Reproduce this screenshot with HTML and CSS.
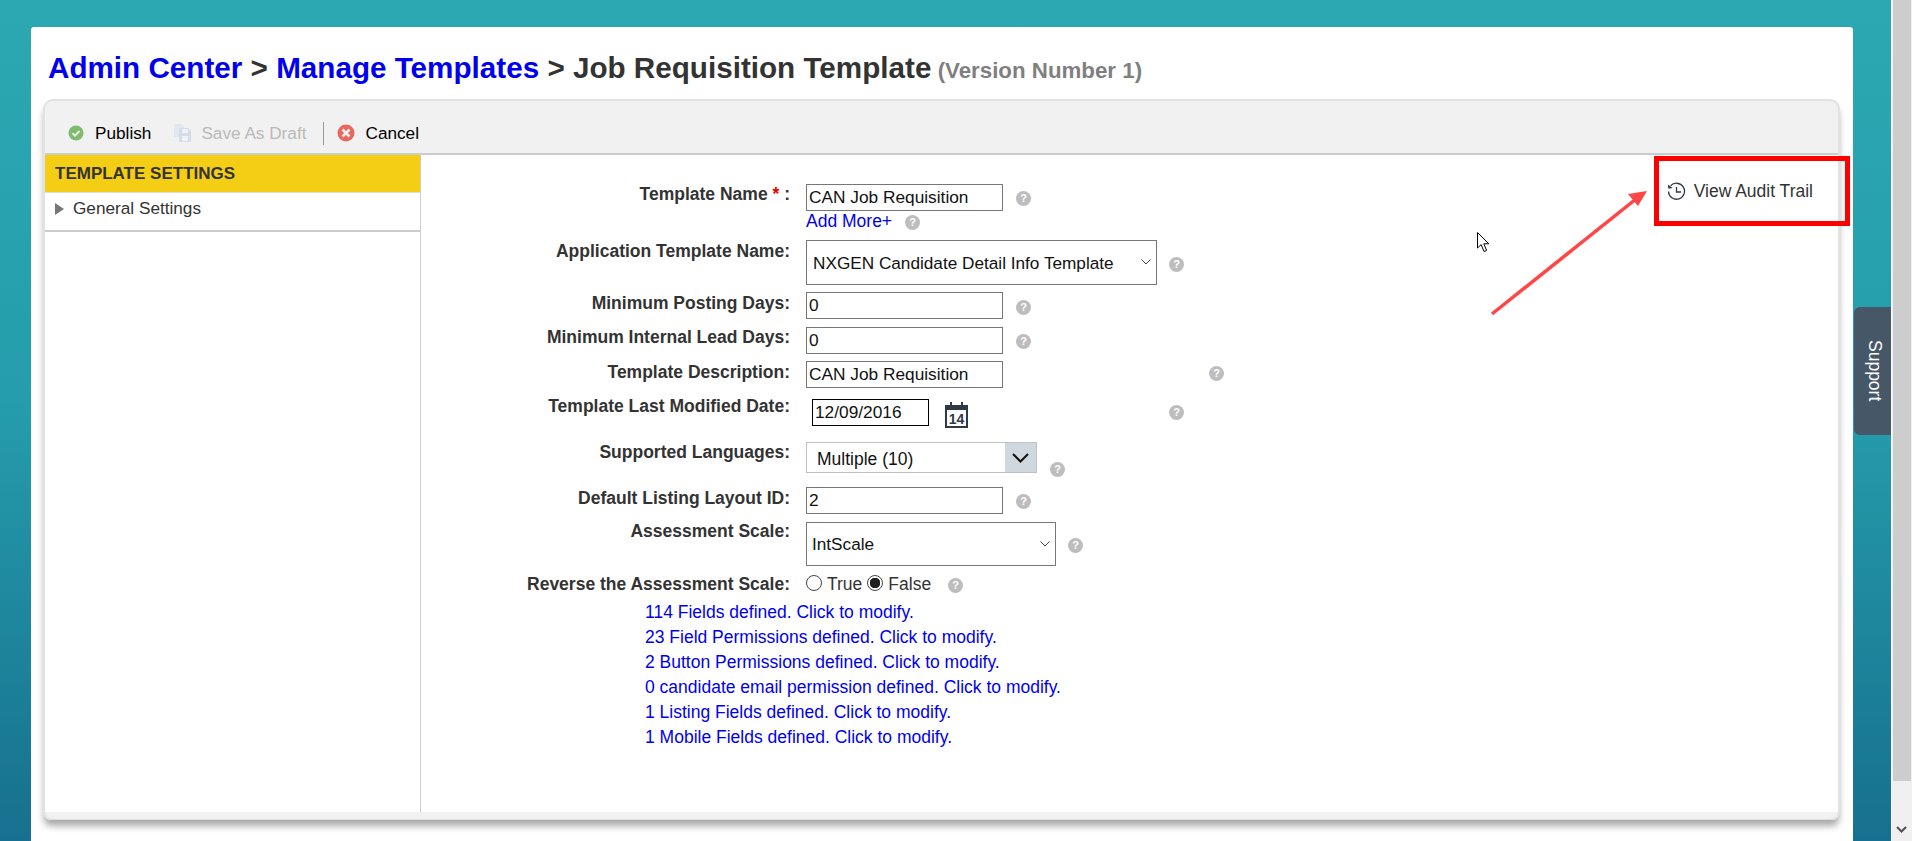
FILE: index.html
```html
<!DOCTYPE html>
<html lang="en">
<head>
  <meta charset="UTF-8">
  <meta name="viewport" content="width=device-width, initial-scale=1.0">
  <title>Job Requisition Template</title>
  <link rel="stylesheet" href="styles.css">
</head>

<body>
  <div class="page">
    <div class="backdrop">
      <div class="card">
        <h1 class="page-title">
          <a href="#">Admin Center</a> &gt; <a href="#">Manage Templates</a> &gt; Job Requisition Template
          <small>(Version Number 1)</small>
        </h1>

        <section class="panel">
          <div class="toolbar">
            <button class="tool tool-publish">
              <svg width="16" height="16" viewBox="0 0 16 16">
                <circle cx="8" cy="8" r="7.5" fill="#7dbb6e"/>
                <path d="M4.5 8.2l2.5 2.4 4.5-4.6" fill="none" stroke="#e8f4e4" stroke-width="2"/>
              </svg>
              Publish
            </button>
            <button class="tool tool-draft" disabled>
              <svg width="17" height="18" viewBox="0 0 17 18">
                <path d="M0 0h8l2 2v2H5v9H0z" fill="#e2e8f0"/>
                <path d="M5 4h9l3 3v11H5z" fill="#d3dce8"/>
                <rect x="8" y="5" width="6" height="4" fill="#eef2f7"/>
                <rect x="8" y="12" width="6" height="5" fill="#eef2f7"/>
              </svg>
              Save As Draft
            </button>
            <span class="tool-sep"></span>
            <button class="tool tool-cancel">
              <svg width="18" height="18" viewBox="0 0 18 18">
                <circle cx="9" cy="9" r="8.5" fill="#e8685f"/>
                <path d="M5.5 5.5l7 7M12.5 5.5l-7 7" stroke="#fbeeee" stroke-width="2.6"/>
              </svg>
              Cancel
            </button>
          </div>

          <div class="panel-body">
            <aside class="sidebar">
              <h2 class="sidebar-title">TEMPLATE SETTINGS</h2>
              <div class="sidebar-item"><span class="triangle"></span>General Settings</div>
            </aside>

            <main class="content">
              <form class="form">
                <div class="row row-name">
                  <label class="label">Template Name <span class="req">*</span> :</label>
                  <input class="text" type="text" value="CAN Job Requisition">
                  <span class="help">?</span>
                </div>
                <div class="row row-more">
                  <a class="add-more" href="#">Add More+</a>
                  <span class="help">?</span>
                </div>
                <div class="row row-app">
                  <label class="label">Application Template Name:</label>
                  <span class="select-wrap select-app">
                    <select class="select"><option>NXGEN Candidate Detail Info Template</option></select>
                    <svg class="select-arrow" width="10" height="6" viewBox="0 0 10 6"><path d="M.5.5L5 5 9.500.5" fill="none" stroke="#444"/></svg>
                  </span>
                  <span class="help">?</span>
                </div>
                <div class="row row-posting">
                  <label class="label">Minimum Posting Days:</label>
                  <input class="text" type="text" value="0">
                  <span class="help">?</span>
                </div>
                <div class="row row-lead">
                  <label class="label">Minimum Internal Lead Days:</label>
                  <input class="text" type="text" value="0">
                  <span class="help">?</span>
                </div>
                <div class="row row-desc">
                  <label class="label">Template Description:</label>
                  <input class="text" type="text" value="CAN Job Requisition">
                  <span class="help">?</span>
                </div>
                <div class="row row-date">
                  <label class="label">Template Last Modified Date:</label>
                  <input class="text text-date" type="text" value="12/09/2016">
                  <svg class="calendar" width="23" height="26" viewBox="0 0 23 26">
                    <path d="M1 4h21v21H1z" fill="#fff" stroke="#2f3a45" stroke-width="2"/>
                    <rect x="1" y="3" width="21" height="5" fill="#2f3a45"/>
                    <path d="M6 0v5M17 0v5" stroke="#2f3a45" stroke-width="2"/>
                    <text x="11.500" y="22" text-anchor="middle" class="calendar-day">14</text>
                  </svg>
                  <span class="help">?</span>
                </div>
                <div class="row row-lang">
                  <label class="label">Supported Languages:</label>
                  <div class="multi">
                    <span class="multi-value">Multiple (10)</span>
                    <span class="multi-btn">
                      <svg width="17" height="10" viewBox="0 0 17 10"><path d="M1 1l7.500 7.500L16 1" fill="none" stroke="#111" stroke-width="2"/></svg>
                    </span>
                  </div>
                  <span class="help">?</span>
                </div>
                <div class="row row-layout">
                  <label class="label">Default Listing Layout ID:</label>
                  <input class="text" type="text" value="2">
                  <span class="help">?</span>
                </div>
                <div class="row row-scale">
                  <label class="label">Assessment Scale:</label>
                  <span class="select-wrap select-scale">
                    <select class="select"><option>IntScale</option></select>
                    <svg class="select-arrow" width="10" height="6" viewBox="0 0 10 6"><path d="M.5.5L5 5 9.500.5" fill="none" stroke="#444"/></svg>
                  </span>
                  <span class="help">?</span>
                </div>
                <div class="row row-reverse">
                  <label class="label">Reverse the Assessment Scale:</label>
                  <div class="radios">
                    <input class="radio" type="radio" name="reverse"><span>True</span>
                    <input class="radio" type="radio" name="reverse" checked><span>False</span>
                  </div>
                  <span class="help">?</span>
                </div>

                <ul class="links">
                  <li><a href="#">114 Fields defined. Click to modify.</a></li>
                  <li><a href="#">23 Field Permissions defined. Click to modify.</a></li>
                  <li><a href="#">2 Button Permissions defined. Click to modify.</a></li>
                  <li><a href="#">0 candidate email permission defined. Click to modify.</a></li>
                  <li><a href="#">1 Listing Fields defined. Click to modify.</a></li>
                  <li><a href="#">1 Mobile Fields defined. Click to modify.</a></li>
                </ul>
              </form>

              <a class="audit" href="#">
                <svg width="19" height="19" viewBox="0 0 19 19">
                  <path d="M3.600 3.800A8 8 0 1 1 1.500 9.500" fill="none" stroke="#2f3a45" stroke-width="1.300"/>
                  <path d="M.8 2.500l.6 4.200 4.200-.7z" fill="#2f3a45"/>
                  <path d="M9.500 5v5h4.500" fill="none" stroke="#2f3a45" stroke-width="1.300"/>
                </svg>
                View Audit Trail
              </a>
            </main>
          </div>
          <div class="panel-foot"></div>
        </section>
      </div>
    </div>

    <div class="scrollbar">
      <div class="scroll-thumb"></div>
      <svg class="scroll-down" width="11" height="7" viewBox="0 0 11 7"><path d="M1 1l4.500 4.500L10 1" fill="none" stroke="#505050" stroke-width="2"/></svg>
    </div>

    <a class="support" href="#">Support</a>

    <!-- annotations drawn over the screenshot -->
    <div class="callout"></div>
    <svg class="arrow" width="160" height="128" viewBox="0 0 160 128">
      <path d="M2 125L146 10" stroke="#ff4545" stroke-width="3.500"/>
      <path d="M157 2L148 17 138 5z" fill="#ff4545"/>
    </svg>
    <svg class="cursor" width="13" height="21" viewBox="0 0 13 21">
      <path d="M.5.500V16l3.600-3.400L7 19.500l2.600-1.100-2.800-6.600h5z" fill="#fff" stroke="#000"/>
    </svg>
  </div>
</body>
</html>
```

FILE: styles.css
```css
/* Base */
* {
  box-sizing: border-box;
}

html,
body {
  margin: 0;
  height: 100%;
  overflow: hidden;
}

body {
  font-family: "Liberation Sans", Arial, sans-serif;
  font-size: 17.5px;
  line-height: 20px;
  color: #333;
}

a {
  color: #0000ee;
  text-decoration: none;
}

.page {
  position: relative;
  display: flex;
  height: 841px;
  background: #fff;
}

.backdrop {
  flex: 1;
  padding: 27px 38px 0 31px;
  background: linear-gradient(#2ba8b2 0, #259dac 400px, #17708f 841px);
}

.card {
  height: 100%;
  padding: 23px 13px 0 12px;
  background: #fff;
  border-radius: 3px 3px 0 0;
}

/* Heading */
.page-title {
  height: 36px;
  margin: 0 0 13px 5px;
  font-size: 29.65px;
  line-height: 36px;
  font-weight: bold;
  white-space: nowrap;
}

.page-title small {
  margin-left: -2px;
  font-size: 22.3px;
  line-height: 1;
  color: #7f7f7f;
}

/* Panel */
.panel {
  display: flex;
  flex-direction: column;
  height: 721px;
  border: 2px solid #e2e2e2;
  border-bottom: 0;
  border-radius: 10px 10px 8px 8px;
  background: #f1f1f1;
  box-shadow: 0 7px 7px -1px #aaa;
}

.toolbar {
  display: flex;
  align-items: center;
  height: 54px;
  padding: 12px 0 0 23px;
  font-size: 17.2px;
  border-bottom: 2px solid #ccc;
}

.tool {
  all: unset;
  display: flex;
  align-items: center;
  gap: 10px;
  color: #000;
  cursor: pointer;
}

.tool-publish {
  gap: 11px;
  margin-right: 23px;
}

.tool-draft {
  color: #b9b9b9;
}

.tool-sep {
  width: 1px;
  height: 23px;
  margin: 0 13px 0 17px;
  background: #999;
}

.panel-body {
  flex: 1;
  display: flex;
  min-height: 0;
  background: #fff;
}

.panel-foot {
  height: 8px;
  border-bottom: 1px solid #ddd;
  border-radius: 0 0 8px 8px;
}

/* Sidebar */
.sidebar {
  width: 376px;
  border-right: 1px solid #ccc;
}

.sidebar-title {
  margin: 0;
  height: 38px;
  padding: 9px 0 0 10px;
  font-size: 17px;
  line-height: 20px;
  background: #f4cd15;
  border-bottom: 1px solid #ddd;
}

.sidebar-item {
  display: flex;
  height: 39px;
  padding: 5px 0 0 10px;
  font-size: 17.2px;
  border-bottom: 2px solid #ccc;
}

.triangle {
  width: 0;
  height: 0;
  margin: 5px 9px 0 0;
  border-left: 9px solid #777;
  border-top: 6px solid transparent;
  border-bottom: 6px solid transparent;
}

/* Form */
.content {
  flex: 1;
  display: flex;
  justify-content: space-between;
  align-items: flex-start;
  padding: 29px 25px 0 0;
}

.row {
  display: flex;
  align-items: flex-start;
}

.label {
  width: 369px;
  margin-right: 16px;
  text-align: right;
  font-weight: bold;
}

.req {
  color: #e00;
}

.text {
  width: 197px;
  height: 27px;
  padding: 0 2px;
  border: 1px solid #767676;
  font: inherit;
  font-size: 17.3px;
  color: #111;
  background: #fff;
}

.help {
  flex: none;
  width: 15px;
  height: 15px;
  margin-left: 13px;
  border-radius: 50%;
  background: #bdbdbd;
  color: #fff;
  font-size: 11px;
  line-height: 15px;
  font-weight: bold;
  text-align: center;
}

.row-name .help { margin-top: 7px; }

.row-more {
  height: 21px;
  padding: 0 0 0 385px;
}

.row-more .help { margin-top: 4px; }

.add-more {
  display: block;
}

.row-app {
  margin-top: 8px;
}

.row-app .label,
.row-posting .label,
.row-desc .label,
.row-layout .label {
  padding-top: 1px;
}

.row-app .help { margin: 17px 0 0 12px; }

.row-posting { margin-top: 7px; }
.row-posting .help { margin-top: 8px; }

.row-lead { margin-top: 8px; }
.row-lead .help { margin-top: 7px; }

.row-desc { margin-top: 7px; }
.row-desc .help { margin: 5px 0 0 206px; }

.row-date { margin-top: 8px; }
.row-date .help { margin: 9px 0 0 201px; }

.text-date {
  width: 117px;
  margin: 3px 0 0 6px;
  border-color: #000;
}

.calendar {
  margin: 6px 0 0 16px;
}

.calendar-day {
  font-size: 14px;
  font-weight: bold;
  fill: #2f3a45;
}

.row-lang {
  height: 31px;
  margin-top: 14px;
}

.row-lang .help { margin-top: 20px; }

.multi {
  display: flex;
  width: 231px;
  height: 31px;
  border: 1px solid #c0c0c0;
}

.multi-value {
  flex: 1;
  padding: 6px 0 0 10px;
  color: #111;
}

.multi-btn {
  display: flex;
  align-items: center;
  justify-content: center;
  width: 31px;
  background: #d0d8df;
}

.row-layout { margin-top: 14px; }
.row-layout .help { margin-top: 7px; }

.select-wrap {
  position: relative;
  display: block;
}

.select-app { width: 351px; height: 45px; }
.select-scale { width: 250px; height: 44px; }

.select {
  appearance: none;
  width: 100%;
  height: 100%;
  padding: 0 20px 0 6px;
  border: 1px solid #767676;
  border-radius: 0;
  font: inherit;
  font-size: 17.2px;
  color: #111;
  background: #fff;
}

.select-scale .select { padding-left: 5px; }

.select-arrow {
  position: absolute;
  top: 19px;
  right: 6px;
}

.row-scale { margin-top: 8px; }
.row-scale .label { margin-top: -1px; }
.row-scale .help { margin: 16px 0 0 12px; }

.row-reverse { margin-top: 8px; }
.row-reverse .help { margin: 4px 0 0 17px; }

.radios {
  display: flex;
  align-items: center;
  height: 20px;
  color: #333;
}

.radio {
  appearance: none;
  width: 16px;
  height: 16px;
  margin: -3px 5px 0 0;
  border: 1px solid #444;
  border-radius: 50%;
  background: #fff;
}

.radio:checked {
  background: radial-gradient(circle, #222 0 5px, #fff 5.500px);
}

.radios span:first-of-type {
  margin-right: 5px;
}

.links {
  list-style: none;
  margin: 6px 0 0;
  padding: 0 0 0 224px;
}

.links li {
  line-height: 25px;
}

.audit {
  display: flex;
  align-items: center;
  gap: 8px;
  margin-top: -3px;
  color: #333;
}

/* Scrollbar */
.scrollbar {
  position: relative;
  width: 21px;
  padding: 0 1px;
  background: #f0f0f0;
  border-left: 1px solid #fff;
}

.scroll-thumb {
  height: 781px;
  background: #cdcdcd;
}

.scroll-down {
  position: absolute;
  left: 4px;
  bottom: 8px;
}

/* Things lying over the page */
.support {
  position: absolute;
  top: 307px;
  left: 1854px;
  width: 37px;
  height: 128px;
  padding-left: 4px;
  display: flex;
  align-items: center;
  justify-content: center;
  writing-mode: vertical-rl;
  border-radius: 6px 0 0 6px;
  background: #465767;
  color: #fff;
}

.callout {
  position: absolute;
  top: 156px;
  left: 1654px;
  width: 196px;
  height: 70px;
  border: 5px solid #f00;
}

.arrow {
  position: absolute;
  top: 189px;
  left: 1490px;
}

.cursor {
  position: absolute;
  top: 232px;
  left: 1477px;
}
```
